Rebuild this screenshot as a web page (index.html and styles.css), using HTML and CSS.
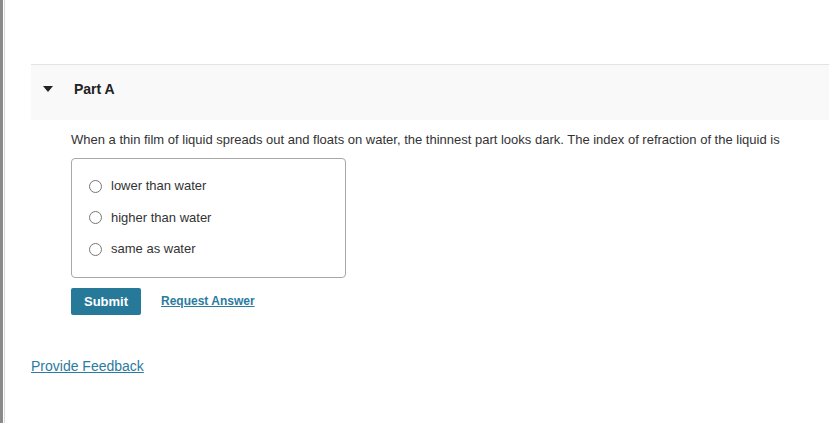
FILE: index.html
```html
<!DOCTYPE html>
<html>
<head>
<meta charset="utf-8">
<link rel="stylesheet" href="styles.css">
</head>
<body>
<div class="frame">
  <div class="content">
    <section class="part">
      <div class="part-header">
        <span class="caret"></span>
        <span class="part-title">Part A</span>
      </div>
      <div class="part-body">
        <p class="question">When a thin film of liquid spreads out and floats on water, the thinnest part looks dark. The index of refraction of the liquid is</p>
        <div class="options">
          <label class="option"><span class="radio"></span>lower than water</label>
          <label class="option"><span class="radio"></span>higher than water</label>
          <label class="option"><span class="radio"></span>same as water</label>
        </div>
        <div class="actions">
          <button class="submit">Submit</button>
          <a class="request" href="#">Request Answer</a>
        </div>
      </div>
    </section>
    <a class="feedback" href="#">Provide Feedback</a>
  </div>
</div>
</body>
</html>
```
FILE: styles.css
```css
html, body {
  margin: 0;
  padding: 0;
  background: #fff;
}
body {
  font-family: "Liberation Sans", Arial, sans-serif;
  color: #333;
  width: 829px;
  height: 423px;
  overflow: hidden;
}
.frame {
  height: 423px;
  border-left: 3px solid #8a8a8a;
  box-shadow: inset 1px 0 0 #fff, inset 2px 0 0 #d8d8d8;
  box-sizing: border-box;
}
.content {
  padding: 64px 0 0 28px;
}
.part-header {
  display: flex;
  align-items: center;
  box-sizing: border-box;
  height: 56px;
  padding: 0 0 8px 12px;
  background: #f9f9f9;
  border-top: 1px solid #e3e3e3;
}
.caret {
  width: 0;
  height: 0;
  border-left: 5px solid transparent;
  border-right: 5px solid transparent;
  border-top: 6px solid #222;
  margin-right: 21px;
  margin-top: 1px;
}
.part-title {
  font-weight: bold;
  font-size: 14px;
  color: #222;
}
.part-body {
  padding: 12px 0 0 40px;
}
.question {
  margin: 0;
  font-size: 13px;
  line-height: 16px;
  color: #333;
}
.options {
  box-sizing: border-box;
  margin-top: 10px;
  width: 275px;
  height: 120px;
  border: 1px solid #a8a8a8;
  border-radius: 4px;
  padding: 19px 0 0 17px;
  display: flex;
  flex-direction: column;
  gap: 15.5px;
}
.option {
  display: flex;
  align-items: center;
  font-size: 13px;
  line-height: 16px;
  color: #333;
}
.radio {
  width: 11px;
  height: 11px;
  border: 1px solid #767676;
  border-radius: 50%;
  margin-right: 9px;
  background: #fff;
}
.actions {
  display: flex;
  align-items: center;
  margin-top: 10px;
  gap: 20px;
}
.submit {
  width: 70px;
  height: 27px;
  border: none;
  border-radius: 2px;
  background: #27799a;
  color: #fff;
  font-family: "Liberation Sans", Arial, sans-serif;
  font-weight: bold;
  font-size: 13px;
  padding: 0;
}
.request {
  font-size: 12px;
  font-weight: bold;
  color: #2b7ba0;
  text-decoration: underline;
  margin-top: -2px;
}
.feedback {
  display: inline-block;
  margin-top: 43px;
  font-size: 14px;
  color: #2b7ba0;
  text-decoration: underline;
}
```
